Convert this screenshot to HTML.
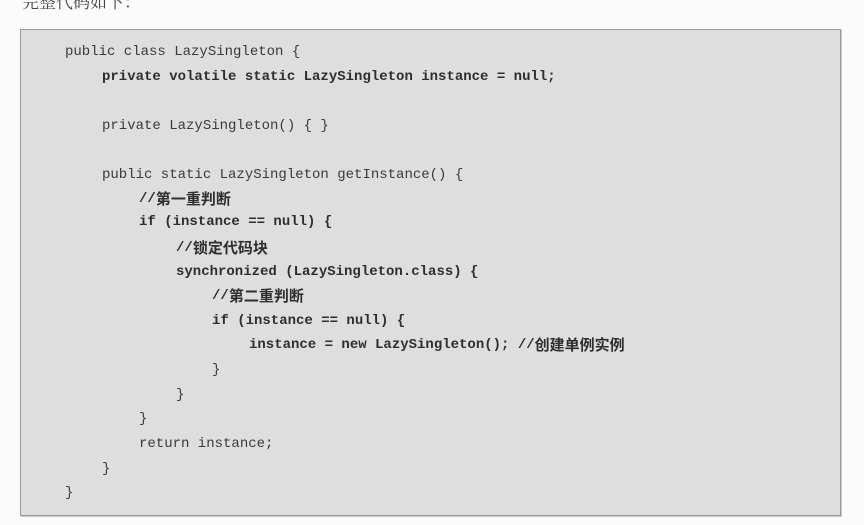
<!DOCTYPE html>
<html><head><meta charset="utf-8"><style>
html,body{margin:0;padding:0;background:#fbfbfb;width:864px;height:525px;overflow:hidden;position:relative}
.top{position:absolute;left:22px;top:-12px;font:17px "Liberation Serif","Noto Serif CJK SC",serif;color:#444}
.box{position:absolute;left:20px;top:29px;width:819px;height:485px;background:#dedede;border:1px solid #9a9a9a;box-shadow:1px 1px 0 #c8c8c8}
.l{position:absolute;font:14px/18px "Liberation Mono","Noto Sans CJK SC",monospace;color:#3a3a3a;white-space:pre;height:18px}
.b{font-weight:bold;color:#2e2e2e}
.c{font:bold 15px/18px "Noto Sans CJK SC",sans-serif;vertical-align:top;display:inline-block;height:18px}
</style></head><body>
<div class="top">完整代码如下：</div>
<div class="box"></div>
<div class="l" style="left:65px;top:43px">public class LazySingleton {</div>
<div class="l b" style="left:102px;top:68px">private volatile static LazySingleton instance = null;</div>
<div class="l" style="left:102px;top:117px">private LazySingleton() { }</div>
<div class="l" style="left:102px;top:166px">public static LazySingleton getInstance() {</div>
<div class="l b" style="left:139px;top:190px">//<span class="c">第一重判断</span></div>
<div class="l b" style="left:139px;top:213px">if (instance == null) {</div>
<div class="l b" style="left:176px;top:239px">//<span class="c">锁定代码块</span></div>
<div class="l b" style="left:176px;top:263px">synchronized (LazySingleton.class) {</div>
<div class="l b" style="left:212px;top:287px">//<span class="c">第二重判断</span></div>
<div class="l b" style="left:212px;top:312px">if (instance == null) {</div>
<div class="l b" style="left:249px;top:336px">instance = new LazySingleton(); //<span class="c">创建单例实例</span></div>
<div class="l" style="left:212px;top:361px">}</div>
<div class="l" style="left:176px;top:386px">}</div>
<div class="l" style="left:139px;top:410px">}</div>
<div class="l" style="left:139px;top:435px">return instance;</div>
<div class="l" style="left:102px;top:460px">}</div>
<div class="l" style="left:65px;top:484px">}</div>
</body></html>
